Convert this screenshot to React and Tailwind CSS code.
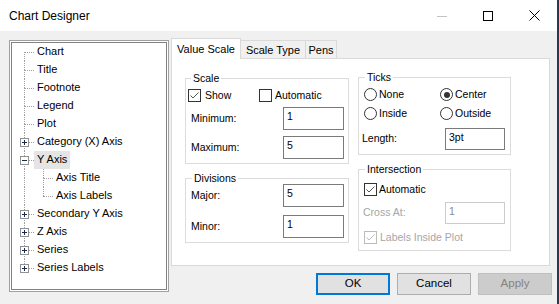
import React from "react";

const TREE = [
  { label: "Chart", first: true },
  { label: "Title" },
  { label: "Footnote" },
  { label: "Legend" },
  { label: "Plot" },
  { label: "Category (X) Axis", box: "plus" },
  { label: "Y Axis", box: "minus", selected: true },
  { label: "Axis Title", child: true },
  { label: "Axis Labels", child: true, lastChild: true },
  { label: "Secondary Y Axis", box: "plus" },
  { label: "Z Axis", box: "plus" },
  { label: "Series", box: "plus" },
  { label: "Series Labels", box: "plus", last: true },
];

const ExpandBox = ({ type }) => (
  <svg className="absolute left-[8px] top-[5px]" width="9" height="9" viewBox="0 0 9 9">
    <rect x="0.5" y="0.5" width="8" height="8" fill="#fff" stroke="#919191" />
    <path d="M2 4.5h5" stroke="#1c2a48" />
    {type === "plus" && <path d="M4.5 2v5" stroke="#1c2a48" />}
  </svg>
);

const TreeRow = ({ item }) => {
  const dot = "border-[#a0a0a0] border-dotted";
  return (
    <div className="relative flex h-[18px] items-stretch">
      <div className="w-[12px] shrink-0" />
      {/* level 0 connector */}
      <div className="flex w-[10px] shrink-0 flex-col">
        <div className={`h-[9px] ${item.first ? "" : `border-l ${dot}`}`} />
        <div
          className={`flex-1 ${item.last ? "" : `border-l ${dot}`} ${item.child ? "" : `border-t ${dot}`}`}
        />
      </div>
      {item.child && (
        <>
          <div className="w-[9px] shrink-0" />
          <div className="flex w-[10px] shrink-0 flex-col">
            <div className={`h-[9px] border-l ${dot}`} />
            <div className={`flex-1 border-t ${dot} ${item.lastChild ? "" : `border-l ${dot}`}`} />
          </div>
        </>
      )}
      {item.box && <ExpandBox type={item.box} />}
      <div className="flex items-stretch">
        <span
          className={`flex items-center px-[3px] pb-[2px] leading-none ${item.selected ? "bg-[#e5e5e5]" : ""}`}
        >
          {item.label}
        </span>
      </div>
    </div>
  );
};

const Check = ({ checked, disabled }) => (
  <span
    className={`flex h-[13px] w-[13px] shrink-0 items-center justify-center border bg-white ${
      disabled ? "border-[#bcbcbc]" : "border-[#333333]"
    }`}
  >
    {checked && (
      <svg width="11" height="11" viewBox="0 0 11 11">
        <path
          d="M1.5 5.5L4 8L9.5 2.5"
          fill="none"
          stroke={disabled ? "#bcbcbc" : "#555555"}
          strokeWidth="1"
        />
      </svg>
    )}
  </span>
);

const Radio = ({ on }) => (
  <span className="flex h-[13px] w-[13px] shrink-0 items-center justify-center rounded-full border border-[#333333] bg-white">
    {on && <span className="h-[6px] w-[6px] rounded-full bg-[#333333]" />}
  </span>
);

const Field = ({ value, w, h, disabled }) => (
  <div
    className={`${w} ${h} shrink-0 border bg-white pl-[3px] pt-[2px] leading-[13px] ${
      disabled ? "border-[#cccccc] text-[#8a8a8a]" : "border-[#7a7a7a] text-black"
    }`}
  >
    {value}
  </div>
);

const Group = ({ title, className, legendClass, children }) => (
  <fieldset className={`shrink-0 border border-[#dcdcdc] ${className}`}>
    <legend className={`px-[2px] leading-[12px] ${legendClass}`}>{title}</legend>
    {children}
  </fieldset>
);

const Button = ({ children, variant }) => {
  const styles = {
    default: "border-2 border-[#0078d7] bg-[#e1e1e1] text-black",
    normal: "border border-[#adadad] bg-[#e1e1e1] text-black",
    disabled: "border border-[#bfbfbf] bg-[#cccccc] text-[#838383]",
  };
  return (
    <div className={`flex h-[22px] w-[74px] items-center justify-center text-[11.5px] ${styles[variant]}`}>
      {children}
    </div>
  );
};

const App = () => {
  return (
    <div className="flex h-[304px] w-[559px] flex-col overflow-hidden border-r-2 border-[#2a3a4b] bg-[#f0f0f0] font-['Liberation_Sans',Arial,sans-serif] text-black">
      {/* TITLE BAR */}
      <div className="flex h-[31px] shrink-0 items-center bg-white">
        <span className="ml-[9px] flex-1 text-[12px]">Chart Designer</span>
        <div className="flex h-full w-[46px] items-center justify-center">
          <svg width="10" height="10" viewBox="0 0 10 10">
            <path d="M0 5.5h10" stroke="#c4c4c4" />
          </svg>
        </div>
        <div className="flex h-full w-[46px] items-center justify-center">
          <svg width="10" height="10" viewBox="0 0 10 10">
            <rect x="0.5" y="0.5" width="9" height="9" fill="none" stroke="#000" />
          </svg>
        </div>
        <div className="flex h-full w-[46px] items-center justify-center">
          <svg width="11" height="11" viewBox="0 0 11 11">
            <path d="M0.5 0.5L10.5 10.5M10.5 0.5L0.5 10.5" stroke="#000" strokeWidth="1" />
          </svg>
        </div>
      </div>

      {/* BODY */}
      <div className="flex flex-1">
        {/* TREE */}
        <div className="ml-[9px] mt-[9px] h-[252px] w-[160px] shrink-0 border border-[#a0a0a0] bg-white p-px">
          <div className="h-full w-full border border-[#828282] bg-white text-[11px]">
            {TREE.map((item) => (
              <TreeRow key={item.label} item={item} />
            ))}
          </div>
        </div>

        {/* RIGHT SIDE */}
        <div className="ml-[2px] mt-[7px] flex w-[381px] shrink-0 flex-col">
          {/* TABS */}
          <div className="flex h-[20px] items-end text-[11px]">
            <div className="relative z-10 -mb-px flex h-[21px] w-[70px] items-center justify-center border border-b-0 border-[#d9d9d9] bg-white">
              Value Scale
            </div>
            <div className="-ml-px flex h-[18px] w-[66px] items-center justify-center border border-b-0 border-[#d9d9d9] bg-[#f0f0f0] pt-[1px]">
              Scale Type
            </div>
            <div className="-ml-px flex h-[18px] w-[32px] items-center justify-center border border-b-0 border-[#d9d9d9] bg-[#f0f0f0] pt-[1px]">
              Pens
            </div>
          </div>

          {/* TAB PAGE */}
          <div className="flex h-[208px] w-[379px] items-start border border-[#d9d9d9] bg-white pl-[13px] pt-[12px] text-[10.5px]">
            {/* Left column */}
            <div className="mt-[1px] flex w-[164px] flex-col">
              <Group title="Scale" className="h-[92px] w-[164px]" legendClass="ml-[5px]">
                <div className="mt-[5px] flex h-[13px] items-center pl-[2px]">
                  <div className="flex w-[71px] items-center gap-[4px]">
                    <Check checked />
                    <span>Show</span>
                  </div>
                  <div className="flex items-center gap-[3px]">
                    <Check />
                    <span>Automatic</span>
                  </div>
                </div>
                <div className="mt-[5px] flex h-[23px] items-center pl-[5px]">
                  <span className="w-[92px]">Minimum:</span>
                  <Field value="1" w="w-[61px]" h="h-[23px]" />
                </div>
                <div className="mt-[6px] flex h-[23px] items-center pl-[5px]">
                  <span className="w-[92px]">Maximum:</span>
                  <Field value="5" w="w-[61px]" h="h-[23px]" />
                </div>
              </Group>

              <Group title="Divisions" className="mt-[8px] h-[71px] w-[164px]" legendClass="ml-[6px]">
                <div className="flex h-[23px] items-center pl-[5px]">
                  <span className="w-[92px]">Major:</span>
                  <Field value="5" w="w-[61px]" h="h-[23px]" />
                </div>
                <div className="mt-[8px] flex h-[23px] items-center pl-[5px]">
                  <span className="w-[92px]">Minor:</span>
                  <Field value="1" w="w-[61px]" h="h-[23px]" />
                </div>
              </Group>
            </div>

            {/* Right column */}
            <div className="ml-[9px] flex w-[153px] flex-col">
              <Group title="Ticks" className="h-[84px] w-[153px]" legendClass="ml-[6px]">
                <div className="mt-[5px] flex h-[13px] items-center pl-[5px]">
                  <div className="flex w-[76px] items-center gap-[2px]">
                    <Radio />
                    <span>None</span>
                  </div>
                  <div className="flex items-center gap-[2px]">
                    <Radio on />
                    <span>Center</span>
                  </div>
                </div>
                <div className="mt-[6px] flex h-[13px] items-center pl-[5px]">
                  <div className="flex w-[76px] items-center gap-[2px]">
                    <Radio />
                    <span>Inside</span>
                  </div>
                  <div className="flex items-center gap-[2px]">
                    <Radio />
                    <span>Outside</span>
                  </div>
                </div>
                <div className="mt-[8px] flex h-[22px] items-center pl-[3px]">
                  <span className="w-[83px]">Length:</span>
                  <Field value="3pt" w="w-[60px]" h="h-[22px]" />
                </div>
              </Group>

              <Group title="Intersection" className="mt-[8px] h-[88px] w-[153px]" legendClass="ml-[6px]">
                <div className="mt-[8px] flex h-[13px] items-center gap-[2px] pl-[5px]">
                  <Check checked />
                  <span>Automatic</span>
                </div>
                <div className="mt-[6px] flex h-[22px] items-center pl-[4px] text-[#a6a6a6]">
                  <span className="w-[82px]">Cross At:</span>
                  <Field value="1" w="w-[60px]" h="h-[22px]" disabled />
                </div>
                <div className="mt-[7px] flex h-[13px] items-center gap-[3px] pl-[5px] text-[#a6a6a6]">
                  <Check checked disabled />
                  <span>Labels Inside Plot</span>
                </div>
              </Group>
            </div>
          </div>

          {/* BUTTONS */}
          <div className="mt-[7px] flex justify-end gap-[7px]">
            <Button variant="default">OK</Button>
            <Button variant="normal">Cancel</Button>
            <Button variant="disabled">Apply</Button>
          </div>
        </div>
      </div>
    </div>
  );
};

export default App;
